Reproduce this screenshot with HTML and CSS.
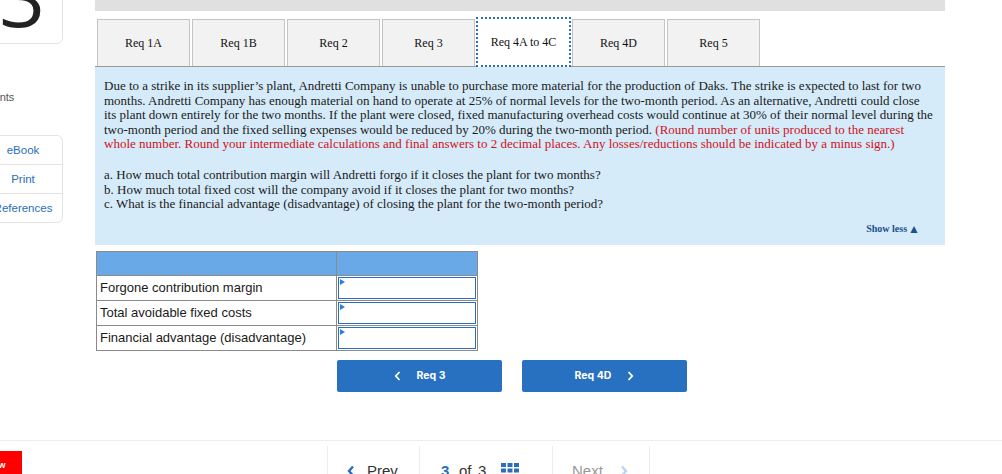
FILE: index.html
```html
<!DOCTYPE html>
<html>
<head>
<meta charset="utf-8">
<link rel="stylesheet" href="styles.css">
</head>
<body>
<div class="app">
  <div class="top">
    <aside class="sidebar">
      <div class="qcard"><span class="qnum">3</span></div>
      <div class="points">points</div>
      <div class="tools">
        <div class="tool">eBook</div>
        <div class="tool">Print</div>
        <div class="tool">References</div>
      </div>
    </aside>
    <main class="main">
      <div class="topbar"></div>
      <div class="tabs">
        <div class="tab">Req 1A</div>
        <div class="tab">Req 1B</div>
        <div class="tab">Req 2</div>
        <div class="tab">Req 3</div>
        <div class="tab active">Req 4A to 4C</div>
        <div class="tab">Req 4D</div>
        <div class="tab">Req 5</div>
      </div>
      <section class="panel">
        <p class="intro">Due to a strike in its supplier’s plant, Andretti Company is unable to purchase more material for the production of Daks. The strike is expected to last for two months. Andretti Company has enough material on hand to operate at 25% of normal levels for the two-month period. As an alternative, Andretti could close its plant down entirely for the two months. If the plant were closed, fixed manufacturing overhead costs would continue at 30% of their normal level during the two-month period and the fixed selling expenses would be reduced by 20% during the two-month period. <span class="red">(Round number of units produced to the nearest whole number. Round your intermediate calculations and final answers to 2 decimal places. Any losses/reductions should be indicated by a minus sign.)</span></p>
        <div class="questions">
          <div>a. How much total contribution margin will Andretti forgo if it closes the plant for two months?</div>
          <div>b. How much total fixed cost will the company avoid if it closes the plant for two months?</div>
          <div>c. What is the financial advantage (disadvantage) of closing the plant for the two-month period?</div>
        </div>
        <div class="showless">Show less<span class="tri">▲</span></div>
      </section>
      <div class="grid">
        <div class="hcell"></div><div class="hcell"></div>
        <div class="lcell">Forgone contribution margin</div><div class="icell"><div class="inp"></div></div>
        <div class="lcell">Total avoidable fixed costs</div><div class="icell"><div class="inp"></div></div>
        <div class="lcell">Financial advantage (disadvantage)</div><div class="icell"><div class="inp"></div></div>
      </div>
      <div class="navbtns">
        <div class="btn"><svg class="chev" width="7" height="10" viewBox="0 0 7 10"><path d="M5.5 1 L1.8 5 L5.5 9" fill="none" stroke="#fff" stroke-width="1.8"/></svg><span>Req 3</span></div>
        <div class="btn"><span>Req 4D</span><svg class="chev" width="7" height="10" viewBox="0 0 7 10"><path d="M1.5 1 L5.2 5 L1.5 9" fill="none" stroke="#fff" stroke-width="1.8"/></svg></div>
      </div>
    </main>
  </div>
  <footer class="footer">
    <div class="logo"><span>Mc</span><span>Graw</span><span>Hill</span></div>
    <div class="pager">
      <div class="pg prev"><svg width="8" height="12" viewBox="0 0 8 12"><path d="M6 1.5 L2 6 L6 10.5" fill="none" stroke="#2a6ebb" stroke-width="2.4"/></svg><span>Prev</span></div>
      <div class="pg count"><b>3</b><span>of</span><span>3</span><svg width="18" height="14" viewBox="0 0 18 14"><g fill="#2a6ebb"><rect x="0" y="0" width="5" height="4"/><rect x="6.5" y="0" width="5" height="4"/><rect x="13" y="0" width="5" height="4"/><rect x="0" y="5.5" width="5" height="4"/><rect x="6.5" y="5.5" width="5" height="4"/><rect x="13" y="5.5" width="5" height="4"/><rect x="0" y="11" width="5" height="4"/><rect x="6.5" y="11" width="5" height="4"/><rect x="13" y="11" width="5" height="4"/></g></svg></div>
      <div class="pg next"><span>Next</span><svg width="8" height="12" viewBox="0 0 8 12"><path d="M2 1.5 L6 6 L2 10.5" fill="none" stroke="#bcd5ef" stroke-width="2.4"/></svg></div>
    </div>
  </footer>
</div>
</body>
</html>
```

FILE: styles.css
```css
html, body {
  margin: 0;
  padding: 0;
  background: #fff;
}
body {
  width: 1002px;
  height: 474px;
  overflow: hidden;
  font-family: "Liberation Sans", Arial, sans-serif;
}
.app {
  display: flex;
  flex-direction: column;
}
.top {
  display: flex;
  height: 440px;
}
.sidebar {
  flex: none;
  width: 80px;
  margin-left: -17px;
}
.qcard {
  height: 52px;
  margin-top: -10px;
  border: 1px solid #e4e4e4;
  border-radius: 6px;
  overflow: hidden;
  display: flex;
  justify-content: center;
  align-items: flex-start;
}
.qnum {
  font-family: "Open Sans", "Liberation Sans", sans-serif;
  font-size: 80px;
  line-height: 80px;
  font-weight: 400;
  color: #222;
  margin-top: -35px;
  margin-left: -2px;
}
.points {
  margin-top: 46px;
  padding-left: 2px;
  font-size: 11px;
  line-height: 14px;
  color: #555;
}
.tools {
  margin-top: 31px;
  border: 1px solid #e4e4e4;
  border-radius: 6px;
}
.tool {
  height: 28px;
  display: flex;
  align-items: center;
  justify-content: center;
  font-size: 11.5px;
  color: #2a6ebb;
  border-top: 1px solid #e4e4e4;
}
.tool:first-child {
  border-top: none;
}
.main {
  flex: none;
  width: 850px;
  margin-left: 32px;
}
.topbar {
  height: 11px;
  background: #e0e0e0;
}
.tabs {
  display: flex;
  align-items: flex-end;
  gap: 2px;
  padding-left: 2px;
  margin-top: 6px;
  height: 49px;
  border-bottom: 1px solid #9a9a9a;
}
.tab {
  width: 93px;
  height: 47px;
  box-sizing: border-box;
  border: 1px solid #c4c4c4;
  border-bottom: none;
  background: #f2f2f2;
  display: flex;
  align-items: center;
  justify-content: center;
  font-family: "Liberation Serif", "Times New Roman", serif;
  font-size: 12px;
  color: #111;
}
.tab.active {
  width: 95px;
  height: 50px;
  margin-left: -1px;
  margin-right: -1px;
  margin-bottom: -1px;
  background: #fff;
  border: 2px dotted #2a6ebb;
  position: relative;
  z-index: 1;
}
.panel {
  background: #d5ebf9;
  padding: 12px 10px 10px 9px;
  font-family: "Liberation Serif", "Times New Roman", serif;
  font-size: 13px;
  line-height: 14.6px;
  color: #1a1a1a;
}
.intro {
  margin: 0;
}
.red {
  color: #d0111b;
}
.questions {
  margin-top: 16px;
}
.showless {
  display: flex;
  justify-content: flex-end;
  align-items: center;
  margin-top: 11px;
  padding-right: 15px;
  font-size: 10px;
  line-height: 12px;
  font-weight: bold;
  color: #1b4f8e;
}
.tri {
  font-size: 12px;
  margin-left: 1px;
}
.grid {
  margin-top: 6px;
  margin-left: 1px;
  width: 380px;
  display: grid;
  grid-template-columns: 239px 140px;
  grid-template-rows: 23px 24px 24px 24px;
  border: 1px solid #8a8a8a;
  box-sizing: content-box;
  background: #8a8a8a;
  gap: 1px;
}
.hcell {
  background: #6aa9e8;
}
.lcell {
  background: #fff;
  display: flex;
  align-items: center;
  padding-left: 3px;
  font-size: 13px;
  color: #1a1a1a;
}
.icell {
  background: #fff;
  padding: 1px;
}
.inp {
  position: relative;
  height: 100%;
  box-sizing: border-box;
  border: 1px solid #2a6ebb;
}
.inp::before {
  content: "";
  position: absolute;
  left: 1px;
  top: 1px;
  border-left: 5px solid #2a7de0;
  border-top: 3px solid transparent;
  border-bottom: 3px solid transparent;
}
.navbtns {
  display: flex;
  gap: 20px;
  margin-top: 9px;
  padding-left: 242px;
}
.btn {
  width: 165px;
  height: 32px;
  background: #2771c0;
  border-radius: 2px;
  display: flex;
  align-items: center;
  justify-content: center;
  gap: 16px;
  font-family: Inter, Roboto, "Liberation Sans", sans-serif;
  font-weight: 700;
  font-size: 10.5px;
  color: #fff;
}
.footer {
  height: 33px;
  border-top: 1px solid #ececec;
  display: flex;
  position: relative;
}
.logo {
  position: absolute;
  left: -20px;
  top: 10px;
  width: 42px;
  height: 40px;
  background: #f00;
  color: #fff;
  font-weight: bold;
  font-size: 9px;
  line-height: 9px;
  display: flex;
  flex-direction: column;
  padding: 1px 0 0 3px;
  box-sizing: border-box;
}
.pager {
  display: flex;
  margin-left: 327px;
  margin-top: 5px;
  height: 40px;
  border-left: 1px solid #ececec;
}
.pg {
  display: flex;
  align-items: flex-start;
  padding-top: 16px;
  box-sizing: border-box;
  border-right: 1px solid #ececec;
  font-size: 15px;
  line-height: 17px;
  color: #333;
}
.prev {
  width: 92px;
  padding-left: 19px;
  gap: 12px;
}
.prev svg, .next svg {
  margin-top: 3px;
}
.count {
  width: 133px;
  padding-left: 21px;
  gap: 0;
}
.count b {
  color: #2a6ebb;
  width: 18px;
}
.count span:nth-of-type(1) {
  width: 19px;
}
.count span:nth-of-type(2) {
  width: 23px;
}
.count svg {
  margin-top: 1px;
}
.next {
  width: 97px;
  padding-left: 19px;
  gap: 17px;
  color: #999;
}
```
